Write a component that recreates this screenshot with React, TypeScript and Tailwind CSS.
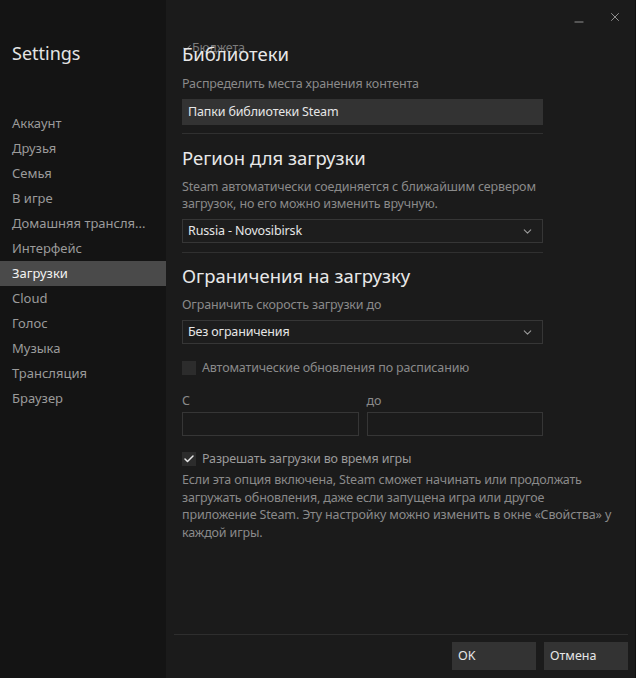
import { X, Minus, ChevronDown, Check } from 'lucide-react';

const navItems = [
  'Аккаунт',
  'Друзья',
  'Семья',
  'В игре',
  'Домашняя трансля...',
  'Интерфейс',
  'Загрузки',
  'Cloud',
  'Голос',
  'Музыка',
  'Трансляция',
  'Браузер',
];

function Select({ value }: { value: string }) {
  return (
    <div className="h-[24px] border border-[#363636] bg-[#1d1d1d] flex items-center justify-between pl-[5px] pr-[8px] text-[12.5px] tracking-[-0.15px] text-[#e6e6e6]">
      <span>{value}</span>
      <ChevronDown size={13} strokeWidth={2} className="text-[#9a9a9a]" />
    </div>
  );
}

export default function App() {
  return (
    <div
      className="w-[636px] h-[678px] flex bg-[#1b1b1b] overflow-hidden"
      style={{ fontFamily: '"Noto Sans", "Open Sans", sans-serif' }}
    >
      <aside className="w-[166px] shrink-0 bg-[#141414] flex flex-col">
        <h1 className="pl-[12px] pt-[39px] text-[18px] leading-[28px] text-[#e4e4e4]">Settings</h1>
        <nav className="mt-[44px] flex flex-col">
          {navItems.map((item) => (
            <div
              key={item}
              className={
                item === 'Загрузки'
                  ? 'h-[25px] flex items-center pl-[12px] text-[13px] bg-[#4a4a4a] text-[#f2f2f2]'
                  : 'h-[25px] flex items-center pl-[12px] text-[13px] text-[#9b9b9b]'
              }
            >
              {item}
            </div>
          ))}
        </nav>
      </aside>

      <main className="flex-1 flex flex-col pl-[8px] pr-[7px] border-r border-[#111]">
        <div className="h-[41px] flex justify-end items-start gap-[22px] pt-[10px] pr-[6px] text-[#a0a0a0]">
          <Minus size={14} strokeWidth={1.5} className="mt-[5px]" />
          <X size={14} strokeWidth={1.5} />
        </div>

        <div className="pl-[8px] pr-[85px] flex-1 flex flex-col text-[12.5px] tracking-[-0.15px]">
          <div className="relative">
            <span className="absolute left-0 top-[-2px] flex items-center text-[12.5px] leading-[17px] text-[#7c7c7c]">
              <Check size={10} strokeWidth={2.5} />
              Бюджета
            </span>
            <h2 className="relative text-[18.5px] leading-[26px] tracking-normal text-[#e8e8e8]">Библиотеки</h2>
          </div>
          <p className="mt-[8px] leading-[17px] text-[#8a8a8a]">Распределить места хранения контента</p>
          <div className="mt-[7px] h-[26px] bg-[#333333] flex items-center pl-[6px] text-[#e6e6e6]">
            Папки библиотеки Steam
          </div>
          <div className="mt-[8px] h-px bg-[#303030]" />

          <h2 className="mt-[11px] text-[18.5px] leading-[26px] tracking-normal text-[#e8e8e8]">Регион для загрузки</h2>
          <p className="mt-[7px] leading-[17px] text-[#8a8a8a]">
            Steam автоматически соединяется с ближайшим сервером загрузок, но его можно изменить вручную.
          </p>
          <div className="mt-[7px]">
            <Select value="Russia - Novosibirsk" />
          </div>
          <div className="mt-[9px] h-px bg-[#303030]" />

          <h2 className="mt-[10px] text-[18.5px] leading-[26px] tracking-normal text-[#e8e8e8]">Ограничения на загрузку</h2>
          <p className="mt-[7px] leading-[17px] text-[#8a8a8a]">Ограничить скорость загрузки до</p>
          <div className="mt-[7px]">
            <Select value="Без ограничения" />
          </div>
          <label className="mt-[15px] flex items-center gap-[6px] leading-[17px] text-[#8a8a8a]">
            <span className="w-[14px] h-[14px] bg-[#2c2c2c]" />
            Автоматические обновления по расписанию
          </label>
          <div className="mt-[16px] grid grid-cols-2 gap-[8px]">
            <div className="flex flex-col gap-[3px]">
              <span className="leading-[17px] text-[#8a8a8a]">С</span>
              <div className="h-[24px] border border-[#363636] bg-[#1b1b1b]" />
            </div>
            <div className="flex flex-col gap-[3px]">
              <span className="leading-[17px] text-[#8a8a8a]">до</span>
              <div className="h-[24px] border border-[#363636] bg-[#1b1b1b]" />
            </div>
          </div>
          <label className="mt-[14px] flex items-center gap-[6px] leading-[17px] text-[#9a9a9a]">
            <span className="w-[14px] h-[14px] bg-[#2c2c2c] flex items-center justify-center text-[#e8e8e8]">
              <Check size={12} strokeWidth={3} />
            </span>
            Разрешать загрузки во время игры
          </label>
          <p className="mt-[4px] mr-[-77px] leading-[17.5px] text-[#8a8a8a]">
            Если эта опция включена, Steam сможет начинать или продолжать загружать обновления, даже если запущена игра или другое приложение Steam. Эту настройку можно изменить в окне «Свойства» у каждой игры.
          </p>
        </div>

        <div className="mb-[8px] border-t border-[#2e2e2e] pt-[7px] flex justify-end gap-[8px]">
          <button className="w-[84px] h-[28px] bg-[#333333] text-left pl-[6px] text-[12.5px] text-[#e6e6e6]">OK</button>
          <button className="w-[84px] h-[28px] bg-[#333333] text-left pl-[6px] text-[12.5px] text-[#e6e6e6]">Отмена</button>
        </div>
      </main>
    </div>
  );
}
